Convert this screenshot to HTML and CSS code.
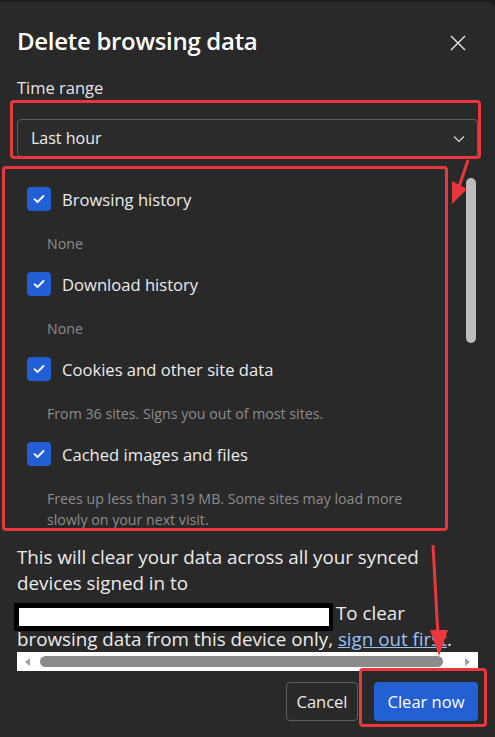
FILE: index.html
```html
<!DOCTYPE html>
<html lang="en">
<head>
<meta charset="utf-8">
<title>Delete browsing data</title>
<link rel="stylesheet" href="styles.css">
</head>
<body>
<div class="dialog">
  <div class="header">
    <h1 class="title">Delete browsing data</h1>
    <button class="close" aria-label="Close">
      <svg width="16" height="16" viewBox="0 0 16 16"><path d="M1 1L15 15M15 1L1 15" stroke="#e8e8e8" stroke-width="1.4" fill="none"/></svg>
    </button>
  </div>
  <div class="field-label">Time range</div>
  <div class="select">
    <span>Last hour</span>
    <svg class="chevron" width="12" height="8" viewBox="0 0 12 8"><path d="M1 1.5L6 6.5L11 1.5" stroke="#d8d8d8" stroke-width="1.2" fill="none"/></svg>
  </div>

  <div class="scroll-region">
    <div class="list">
      <div class="item">
        <div class="check-row"><span class="box"><svg width="12" height="10" viewBox="0 0 12 10"><path d="M1.5 5.2L4.5 8L10.5 2" stroke="#fff" stroke-width="1.8" fill="none" stroke-linecap="round" stroke-linejoin="round"/></svg></span><span class="label">Browsing history</span></div>
        <div class="sub">None</div>
      </div>
      <div class="item">
        <div class="check-row"><span class="box"><svg width="12" height="10" viewBox="0 0 12 10"><path d="M1.5 5.2L4.5 8L10.5 2" stroke="#fff" stroke-width="1.8" fill="none" stroke-linecap="round" stroke-linejoin="round"/></svg></span><span class="label">Download history</span></div>
        <div class="sub">None</div>
      </div>
      <div class="item">
        <div class="check-row"><span class="box"><svg width="12" height="10" viewBox="0 0 12 10"><path d="M1.5 5.2L4.5 8L10.5 2" stroke="#fff" stroke-width="1.8" fill="none" stroke-linecap="round" stroke-linejoin="round"/></svg></span><span class="label">Cookies and other site data</span></div>
        <div class="sub">From 36 sites. Signs you out of most sites.</div>
      </div>
      <div class="item">
        <div class="check-row"><span class="box"><svg width="12" height="10" viewBox="0 0 12 10"><path d="M1.5 5.2L4.5 8L10.5 2" stroke="#fff" stroke-width="1.8" fill="none" stroke-linecap="round" stroke-linejoin="round"/></svg></span><span class="label">Cached images and files</span></div>
        <div class="sub">Frees up less than 319 MB. Some sites may load more<br>slowly on your next visit.</div>
      </div>
    </div>
    <div class="vtrack"><div class="vthumb"></div></div>
  </div>

  <div class="sync-note">
    <div class="line">This will clear your data across all your synced</div>
    <div class="line">devices signed in to</div>
    <div class="line3"><span class="redacted"></span><span class="after">To clear</span></div>
    <div class="line4">browsing data from this device only, <a class="link" href="#">sign out first</a>.</div>
  </div>
  <div class="hscroll">
    <span class="arrow-left"></span>
    <div class="hthumb"></div>
    <span class="arrow-right"></span>
  </div>

  <div class="actions">
    <button class="btn cancel">Cancel</button>
    <button class="btn primary">Clear now</button>
  </div>
</div>

<div class="mark mark-a"></div>
<div class="mark mark-b"></div>
<div class="mark mark-c"></div>
<svg class="arrows" width="495" height="737" viewBox="0 0 495 737">
  <line x1="468" y1="160" x2="457" y2="193" stroke="#e8383d" stroke-width="3"/>
  <polygon points="452,204 452,181 467,189" fill="#e8383d"/>
  <line x1="433" y1="545" x2="438" y2="636" stroke="#e8383d" stroke-width="3"/>
  <polygon points="439,656 430,630 448,630" fill="#e8383d"/>
</svg>
</body>
</html>
```

FILE: styles.css
```css
* { box-sizing: border-box; }

html, body {
  margin: 0;
  padding: 0;
}

body {
  background: #1c1c1c;
  width: 495px;
  height: 737px;
  overflow: hidden;
  position: relative;
  font-family: "Open Sans", "Noto Sans", "Liberation Sans", sans-serif;
  color: #e6e6e6;
}

.dialog {
  margin-top: 2px;
  height: 735px;
  background: #292929;
  border-radius: 0 8px 0 0;
  padding: 0 17px;
  display: flex;
  flex-direction: column;
}

.header {
  display: flex;
  align-items: center;
  justify-content: space-between;
  margin-top: 24px;
  height: 30px;
}

.title {
  margin: 0;
  font-size: 24px;
  font-weight: 600;
  color: #ffffff;
  line-height: 30px;
  letter-spacing: -0.3px;
}

.close {
  background: none;
  border: 0;
  padding: 0;
  width: 16px;
  height: 16px;
  margin-right: 12px;
  margin-top: 3px;
  display: flex;
}

.field-label {
  margin-top: 21px;
  font-size: 16.5px;
  line-height: 22px;
  color: #e6e6e6;
}

.select {
  margin-top: 20px;
  height: 38px;
  border: 1px solid #5c5c5c;
  border-radius: 4px;
  background: #2c2c2c;
  display: flex;
  align-items: center;
  justify-content: space-between;
  padding: 0 12px 0 13px;
  font-size: 16px;
  color: #ececec;
}

.chevron { margin-top: 1px; }

.scroll-region {
  margin-top: 10px;
  height: 361px;
  display: flex;
  overflow: hidden;
}

.list {
  flex: 1;
  padding: 20px 0 0 10px;
}

.item + .item { margin-top: 18px; }

.check-row {
  display: flex;
  align-items: center;
  height: 24px;
}

.box {
  width: 24px;
  height: 24px;
  border-radius: 4px;
  background: #235fd4;
  display: flex;
  align-items: center;
  justify-content: center;
  flex: none;
}

.label {
  margin-left: 11px;
  font-size: 16.6px;
  color: #ececec;
}

.sub {
  margin-top: 22px;
  margin-left: 20px;
  font-size: 14.2px;
  line-height: 21px;
  color: #8c8c8c;
  white-space: nowrap;
}

.vtrack {
  width: 10px;
  margin-right: 2px;
  padding-top: 11px;
}

.vthumb {
  width: 10px;
  height: 165px;
  border-radius: 5px;
  background: #bdbdbd;
}

.sync-note {
  margin-top: 16px;
  font-size: 18.8px;
  color: #ececec;
  white-space: nowrap;
}

.line { line-height: 26px; }

.line3 {
  display: flex;
  align-items: flex-start;
  margin-top: 7px;
  height: 28px;
}

.redacted {
  margin-left: -3px;
  width: 319px;
  height: 28px;
  background: #ffffff;
  border: 5px solid #000000;
  border-right-width: 4px;
  flex: none;
}

.after {
  margin-left: 3px;
  line-height: 20px;
}

.line4 {
  margin-top: -3px;
  line-height: 22px;
}

.link {
  color: #9cc2f5;
  text-decoration: underline;
}

.hscroll {
  margin-top: 2px;
  height: 19px;
  background: #ffffff;
  display: flex;
  align-items: center;
  padding: 0 8px;
}

.arrow-left {
  width: 0;
  height: 0;
  border-top: 4px solid transparent;
  border-bottom: 4px solid transparent;
  border-right: 5px solid #a0a0a0;
}

.arrow-right {
  width: 0;
  height: 0;
  border-top: 4px solid transparent;
  border-bottom: 4px solid transparent;
  border-left: 5px solid #a0a0a0;
  margin-left: auto;
}

.hthumb {
  margin-left: 10px;
  width: 403px;
  height: 11px;
  border-radius: 6px;
  background: #8b8b8b;
}

.actions {
  margin-top: 11px;
  display: flex;
  justify-content: flex-end;
  gap: 16px;
}

.btn {
  height: 39px;
  border-radius: 4px;
  font-family: inherit;
  font-size: 16.5px;
  padding: 0;
}

.cancel {
  width: 72px;
  background: #292929;
  border: 1px solid #5e5e5e;
  color: #ececec;
}

.primary {
  width: 104px;
  background: #2360d1;
  border: 0;
  color: #ffffff;
}

.mark {
  position: absolute;
  border: 3px solid #e8383d;
  border-radius: 4px;
  pointer-events: none;
}

.mark-a { left: 10px; top: 100px; width: 471px; height: 59px; }
.mark-b { left: 2px; top: 166px; width: 446px; height: 365px; }
.mark-c { left: 359px; top: 668px; width: 128px; height: 59px; }

.arrows {
  position: absolute;
  left: 0;
  top: 0;
  pointer-events: none;
}
```
